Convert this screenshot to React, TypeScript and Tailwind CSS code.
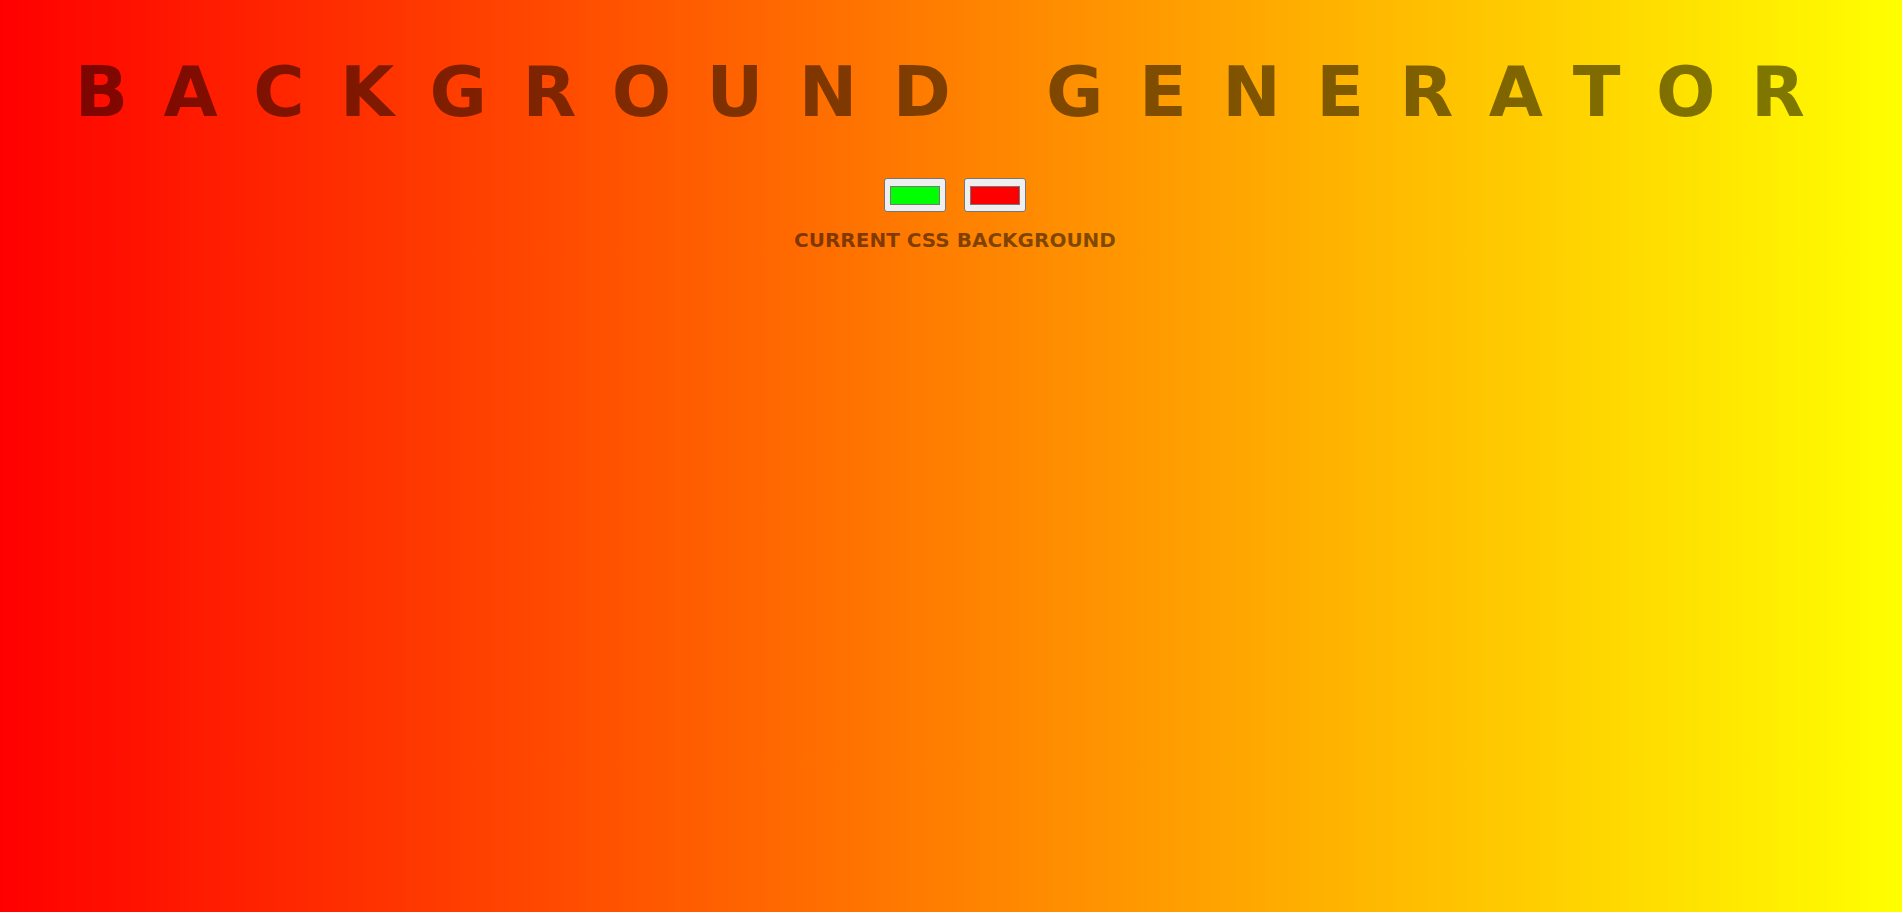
const swatches = ["#00ff00", "#ff0000"];

function ColorBox({ color }: { color: string }) {
  return (
    <div className="w-[62px] h-[34px] bg-[#efefef] border border-[#767676] rounded-[3px] flex items-center justify-center">
      <div className="w-[50px] h-[19px] border border-[#777777]" style={{ backgroundColor: color }} />
    </div>
  );
}

export default function App() {
  return (
    <div
      className="min-h-screen w-full pl-2 bg-[linear-gradient(to_right,#ff0000,#ffff00)] text-center"
      style={{ fontFamily: '"DejaVu Sans", Verdana, sans-serif' }}
    >
      <h1 className="pt-[51px] pl-[5px] text-[70px] leading-[82px] font-bold tracking-[35.4px] text-black/50 whitespace-nowrap">
        BACKGROUND GENERATOR
      </h1>
      <div className="mt-[45px] flex justify-center gap-[18px]">
        {swatches.map((c) => (
          <ColorBox key={c} color={c} />
        ))}
      </div>
      <h3 className="mt-[17px] text-[20px] leading-[23px] font-bold text-black/50">CURRENT CSS BACKGROUND</h3>
    </div>
  );
}
